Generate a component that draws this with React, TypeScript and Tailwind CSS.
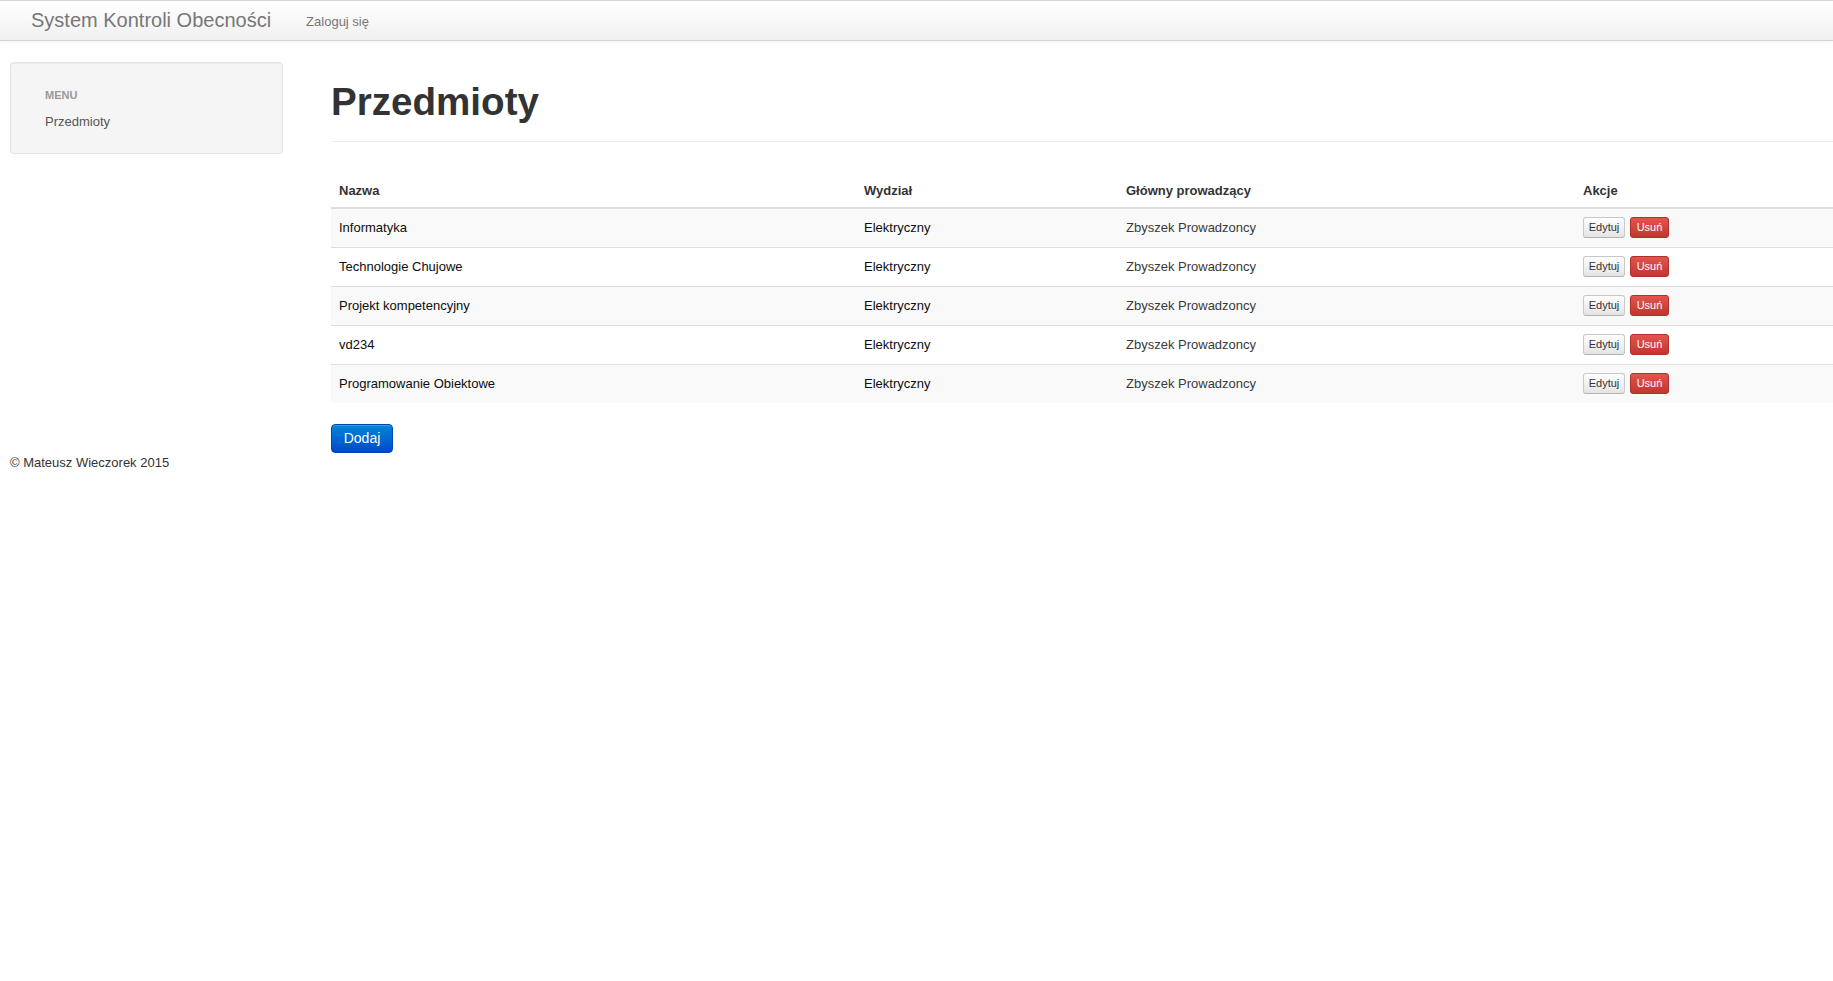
import React from "react";

type Subject = {
  name: string;
  faculty: string;
  lecturer: string;
};

const subjects: Subject[] = [
  { name: "Informatyka", faculty: "Elektryczny", lecturer: "Zbyszek Prowadzoncy" },
  { name: "Technologie Chujowe", faculty: "Elektryczny", lecturer: "Zbyszek Prowadzoncy" },
  { name: "Projekt kompetencyjny", faculty: "Elektryczny", lecturer: "Zbyszek Prowadzoncy" },
  { name: "vd234", faculty: "Elektryczny", lecturer: "Zbyszek Prowadzoncy" },
  { name: "Programowanie Obiektowe", faculty: "Elektryczny", lecturer: "Zbyszek Prowadzoncy" },
];

function Navbar() {
  return (
    <div className="h-[41px] border-t border-[#d6d6d6] border-b border-b-[#d4d4d4] bg-linear-to-b from-white to-[#f0f0f0] shadow-[0_1px_3px_rgba(0,0,0,0.06)]">
      <div className="flex h-[39px] items-center">
        <a className="ml-[31px] text-[20px] leading-[39px] text-[#777]">System Kontroli Obecności</a>
        <a className="ml-[35px] mt-[1px] text-[13px] leading-[39px] text-[#777]">Zaloguj się</a>
      </div>
    </div>
  );
}

function Sidebar() {
  return (
    <div className="h-[92px] w-[273px] shrink-0 rounded-[4px] border border-[#e3e3e3] bg-[#f5f5f5] pt-[22px] pl-[34px] shadow-[inset_0_1px_1px_rgba(0,0,0,0.05)]">
      <div className="text-[11px] font-bold uppercase leading-[20px] text-[#999]">Menu</div>
      <a className="mt-[7px] block text-[13px] leading-[20px] text-[#555]">Przedmioty</a>
    </div>
  );
}

function SmallButton({ label, danger }: { label: string; danger?: boolean }) {
  return (
    <button
      className={`h-[21px] rounded-[3px] border text-[11px] leading-[19px] ${
        danger
          ? "w-[39px] border-[#b0302a] bg-linear-to-b from-[#e2554f] to-[#c33530] text-white"
          : "w-[42px] border-[#c8c8c8] border-b-[#b3b3b3] bg-linear-to-b from-white to-[#e4e4e4] text-[#333]"
      }`}
    >
      {label}
    </button>
  );
}

export default function App() {
  return (
    <div className="min-h-[981px] bg-white font-['Liberation_Sans',Arial,sans-serif] text-[13px] text-[#333]">
      <Navbar />
      <div className="flex gap-[48px] pt-[21px] pl-[10px]">
        <Sidebar />
        <main className="min-w-0 flex-1">
          <div className="mt-[19px] border-b border-[#eee] pb-[18px]">
            <h1 className="text-[38.6px] font-bold leading-[42px] text-[#333]">Przedmioty</h1>
          </div>
          <table className="mt-[32px] w-full table-fixed border-collapse">
            <colgroup>
              <col className="w-[525px]" />
              <col className="w-[262px]" />
              <col className="w-[457px]" />
              <col />
            </colgroup>
            <thead>
              <tr className="border-b-2 border-[#ddd]">
                <th className="h-[34px] px-[8px] text-left font-bold text-[#333]">Nazwa</th>
                <th className="px-[8px] text-left font-bold text-[#333]">Wydział</th>
                <th className="px-[8px] text-left font-bold text-[#333]">Główny prowadzący</th>
                <th className="px-[8px] text-left font-bold text-[#333]">Akcje</th>
              </tr>
            </thead>
            <tbody>
              {subjects.map((s, i) => (
                <tr
                  key={s.name}
                  className={`${i > 0 ? "border-t border-[#ddd]" : ""} ${i % 2 === 0 ? "bg-[#f9f9f9]" : "bg-white"}`}
                >
                  <td className="h-[39px] px-[8px] text-[#0d0d0d]">{s.name}</td>
                  <td className="px-[8px] text-[#0d0d0d]">{s.faculty}</td>
                  <td className="px-[8px] text-[#3a3a3a]">{s.lecturer}</td>
                  <td className="px-[8px]">
                    <div className="flex gap-[5px]">
                      <SmallButton label="Edytuj" />
                      <SmallButton label="Usuń" danger />
                    </div>
                  </td>
                </tr>
              ))}
            </tbody>
          </table>
          <button className="mt-[21px] h-[29px] w-[62px] rounded-[4px] border border-[#0045b8] bg-linear-to-b from-[#0a86d6] to-[#0046cc] text-[14px] text-white shadow-[inset_0_1px_0_rgba(255,255,255,0.2)]">
            Dodaj
          </button>
        </main>
      </div>
      <footer className="mt-[1px] pl-[10px] text-[13px] leading-[18px] text-[#333]">© Mateusz Wieczorek 2015</footer>
    </div>
  );
}
